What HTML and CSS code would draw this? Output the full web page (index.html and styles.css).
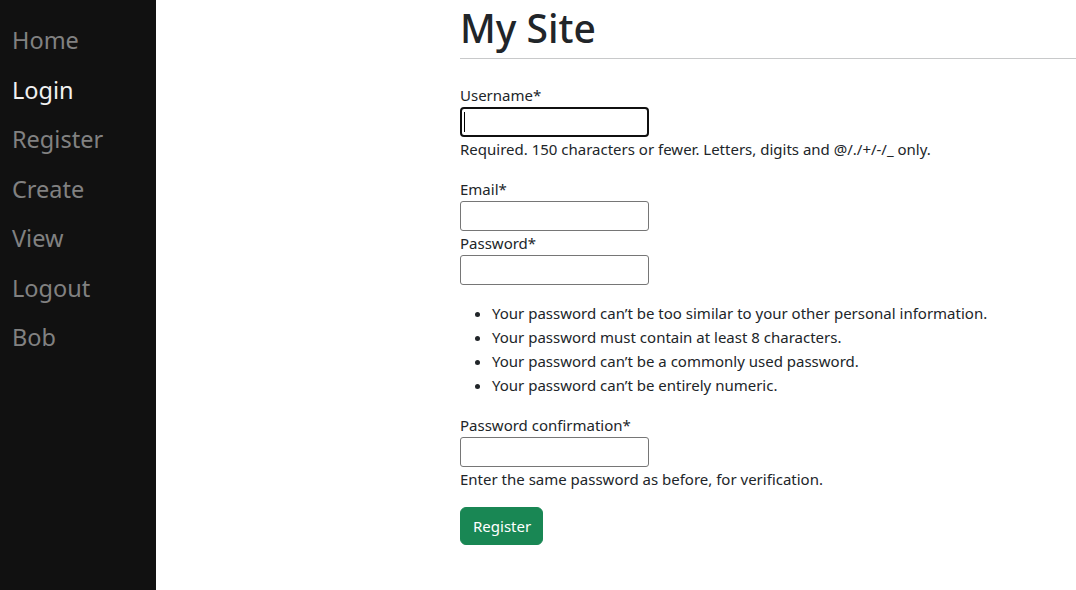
FILE: index.html
```html
<!DOCTYPE html>
<html lang="en">
<head>
<meta charset="utf-8">
<title>My Site</title>
<link rel="stylesheet" href="styles.css">
</head>
<body>
<nav class="sidenav">
  <a href="#" class="nav-link">Home</a>
  <a href="#" class="nav-link active">Login</a>
  <a href="#" class="nav-link">Register</a>
  <a href="#" class="nav-link">Create</a>
  <a href="#" class="nav-link">View</a>
  <a href="#" class="nav-link">Logout</a>
  <a href="#" class="nav-link">Bob</a>
</nav>
<main class="main">
  <h1 class="title">My Site</h1>
  <hr class="rule">
  <form class="form">
    <div class="field first">
      <label class="label" for="u">Username*</label>
      <div class="input focused" id="u"><span class="caret"></span></div>
      <span class="help">Required. 150 characters or fewer. Letters, digits and @/./+/-/_ only.</span>
    </div>
    <div class="field tight">
      <label class="label">Email*</label>
      <div class="input"></div>
    </div>
    <div class="field">
      <label class="label">Password*</label>
      <div class="input"></div>
    </div>
    <ul class="rules">
      <li>Your password can’t be too similar to your other personal information.</li>
      <li>Your password must contain at least 8 characters.</li>
      <li>Your password can’t be a commonly used password.</li>
      <li>Your password can’t be entirely numeric.</li>
    </ul>
    <div class="field">
      <label class="label">Password confirmation*</label>
      <div class="input"></div>
      <span class="help">Enter the same password as before, for verification.</span>
    </div>
    <button type="button" class="btn">Register</button>
  </form>
</main>
</body>
</html>
```

FILE: styles.css
```css
* { box-sizing: border-box; }
html, body { margin: 0; padding: 0; }
body {
  display: flex;
  min-height: 100vh;
  font-family: "Noto Sans", "Open Sans", sans-serif;
  font-size: 15px;
  line-height: 24px;
  color: #212529;
  background: #fff;
}
.sidenav {
  width: 156px;
  flex: none;
  background: #111;
  padding-top: 16px;
  display: flex;
  flex-direction: column;
}
.nav-link {
  display: block;
  padding: 6px 8px 6px 12px;
  font-size: 23.5px;
  line-height: 37.5px;
  color: #818181;
  text-decoration: none;
}
.nav-link.active { color: #f1f1f1; }
.main {
  flex: 1;
  padding-left: 304px;
}
.title {
  margin: 0;
  font-size: 39px;
  line-height: 46px;
  font-weight: 500;
  color: #212529;
  padding-top: 5px;
}
.rule {
  margin: 7px 0 24px 0;
  border: 0;
  border-top: 1px solid #c8c9ca;
}
.form { display: flex; flex-direction: column; align-items: flex-start; }
.field { display: flex; flex-direction: column; align-items: flex-start; margin-bottom: 15px; }
.field.first { margin-bottom: 16px; }
.field.tight { margin-bottom: 0; }
.label { display: block; }
.input {
  width: 189px;
  height: 30px;
  border: 1px solid #767676;
  border-radius: 3px;
  background: #fff;
  position: relative;
}
.input.focused { border: 2px solid #101010; border-radius: 4px; }
.caret {
  position: absolute;
  left: 2px;
  top: 3px;
  width: 1px;
  height: 20px;
  background: #000;
}
.help { display: block; }
.rules {
  margin: 1px 0 16px 0;
  padding-left: 32px;
}
.btn {
  margin-top: 1px;
  font: inherit;
  font-size: 15px;
  line-height: 24px;
  color: #fff;
  background: #198754;
  border: 1px solid #198754;
  border-radius: 6px;
  padding: 6px 12px;
  width: 83px;
  height: 38px;
}
```
